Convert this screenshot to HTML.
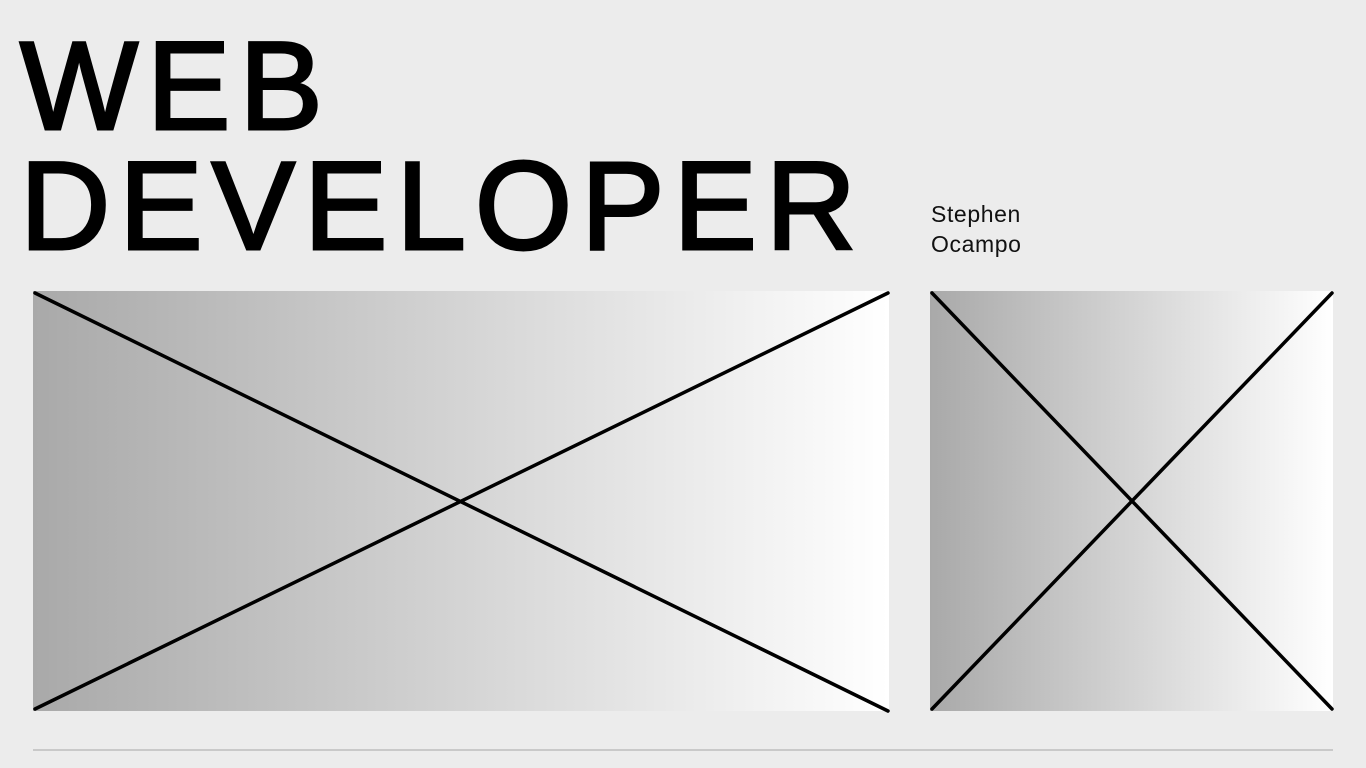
<!DOCTYPE html>
<html><head><meta charset="utf-8"><style>
html,body{margin:0;padding:0;}
body{width:1366px;height:768px;background:#ececec;position:relative;overflow:hidden;font-family:"Liberation Sans",sans-serif;}
.t{position:absolute;left:20px;font-size:125px;font-weight:normal;line-height:1;color:#000;letter-spacing:9px;-webkit-text-stroke:3px #000;}
.name{position:absolute;left:931px;top:199px;font-size:23px;line-height:30px;color:#111;letter-spacing:0.6px;}
.line{position:absolute;left:33px;top:749px;width:1300px;height:2px;background:#c9c9c9;}
</style></head><body>
<div class="t" style="top:24px">WEB</div>
<div class="t" style="top:144px">DEVELOPER</div>
<div class="name">Stephen<br>Ocampo</div>
<svg width="1366" height="768" style="position:absolute;left:0;top:0">
<defs>
<linearGradient id="g" x1="0" x2="1" y1="0" y2="0"><stop offset="0" stop-color="#a9a9a9"/><stop offset="1" stop-color="#ffffff"/></linearGradient>
</defs>
<rect x="33" y="291" width="856" height="420" fill="url(#g)"/>
<rect x="930" y="291" width="403" height="420" fill="url(#g)"/>
<g stroke="#000" stroke-width="3.5" stroke-linecap="round">
<line x1="35" y1="293" x2="888" y2="711"/>
<line x1="35" y1="709" x2="888" y2="293"/>
<line x1="932" y1="293" x2="1332" y2="709"/>
<line x1="932" y1="709" x2="1332" y2="293"/>
</g>
</svg>
<div class="line"></div>
</body></html>
